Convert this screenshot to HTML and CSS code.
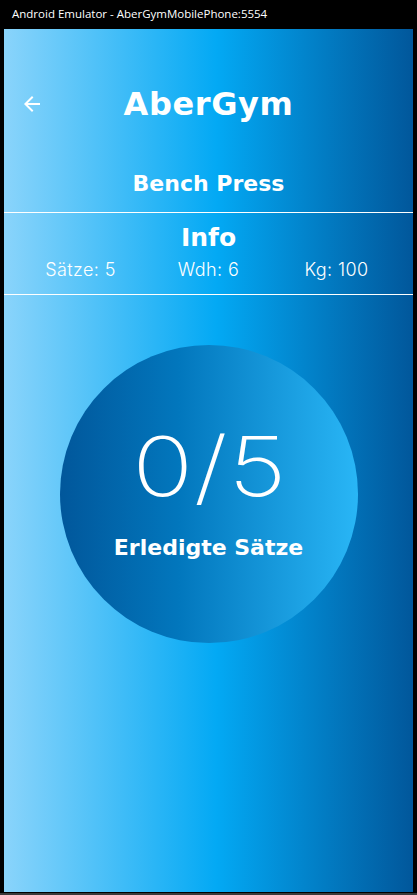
FILE: index.html
```html
<!DOCTYPE html>
<html lang="de">
<head>
<meta charset="utf-8">
<title>AberGym</title>
<link rel="stylesheet" href="styles.css">
</head>
<body>
<div class="frame">
  <div class="titlebar">Android Emulator - AberGymMobilePhone:5554</div>
  <main class="app">
    <header class="header">
      <div class="back">
        <svg width="24" height="24" viewBox="0 0 24 24" aria-hidden="true"><path d="M20 11H7.83l5.59-5.59L12 4l-8 8 8 8 1.41-1.41L7.83 13H20v-2z" fill="#fff"/></svg>
      </div>
      <h1 class="title">AberGym</h1>
      <div class="spacer"></div>
    </header>
    <h2 class="exercise">Bench Press</h2>
    <div class="rule"></div>
    <h3 class="info-title">Info</h3>
    <div class="stats">
      <span class="stat">Sätze: 5</span>
      <span class="stat">Wdh: 6</span>
      <span class="stat">Kg: 100</span>
    </div>
    <div class="rule rule-2"></div>
    <div class="circle">
      <div class="count">0/5</div>
      <div class="count-label">Erledigte Sätze</div>
    </div>
  </main>
</div>
</body>
</html>
```

FILE: styles.css
```css
* { box-sizing: border-box; }
html, body { margin: 0; padding: 0; }
body {
  background: #3a3a3a;
  width: 417px;
  height: 895px;
  overflow: hidden;
}
.frame {
  background: #000;
  width: 417px;
  padding: 0 4px 1px 4px;
}
.titlebar {
  height: 29px;
  padding: 6px 0 0 8px;
  font-family: "Open Sans", "Noto Sans", sans-serif;
  font-size: 11.5px;
  line-height: 16px;
  color: #fff;
  white-space: nowrap;
}
.app {
  width: 409px;
  height: 863px;
  background: linear-gradient(to right, #8ad4fb 0%, #03a9f4 52%, #01579b 100%);
  color: #fff;
  padding-top: 55px;
  overflow: hidden;
}
.header {
  display: grid;
  grid-template-columns: 56px 1fr 56px;
  align-items: center;
  height: 40px;
}
.back {
  display: flex;
  align-items: center;
  padding-left: 16px;
  height: 40px;
}
.back svg { display: block; }
.title {
  margin: 0;
  text-align: center;
  font-family: "DejaVu Sans", sans-serif;
  font-weight: 700;
  font-size: 32px;
  line-height: 40px;
  letter-spacing: 0.6px;
}
.exercise {
  margin: 45px 0 0 0;
  text-align: center;
  font-family: "DejaVu Sans", sans-serif;
  font-weight: 700;
  font-size: 22px;
  line-height: 30px;
}
.rule {
  margin-top: 13px;
  height: 1px;
  background: #fff;
}
.info-title {
  margin: 9px 0 0 0;
  text-align: center;
  font-family: "DejaVu Sans", sans-serif;
  font-weight: 700;
  font-size: 25px;
  line-height: 32px;
}
.stats {
  margin-top: 5px;
  display: grid;
  grid-template-columns: repeat(3, 128px);
  justify-content: center;
}
.stat {
  text-align: center;
  font-family: Inter, "Open Sans", sans-serif;
  font-weight: 300;
  font-size: 18px;
  line-height: 22px;
  letter-spacing: 0.4px;
}
.rule-2 { margin-top: 13px; }
.circle {
  margin: 50px auto 0 auto;
  width: 298px;
  height: 298px;
  border-radius: 50%;
  background: linear-gradient(to right, #01579b 0%, #0277bd 40%, #29b6f6 100%);
  padding-top: 81px;
  text-align: center;
}
.count {
  font-family: Inter, "Open Sans", sans-serif;
  font-weight: 250;
  font-size: 82px;
  line-height: 82px;
  letter-spacing: 0.5px;
  padding-left: 1px;
  transform: scaleX(1.23);
}
.count-label {
  margin-top: 25px;
  font-family: "DejaVu Sans", sans-serif;
  font-weight: 700;
  font-size: 22px;
  line-height: 30px;
}
```
